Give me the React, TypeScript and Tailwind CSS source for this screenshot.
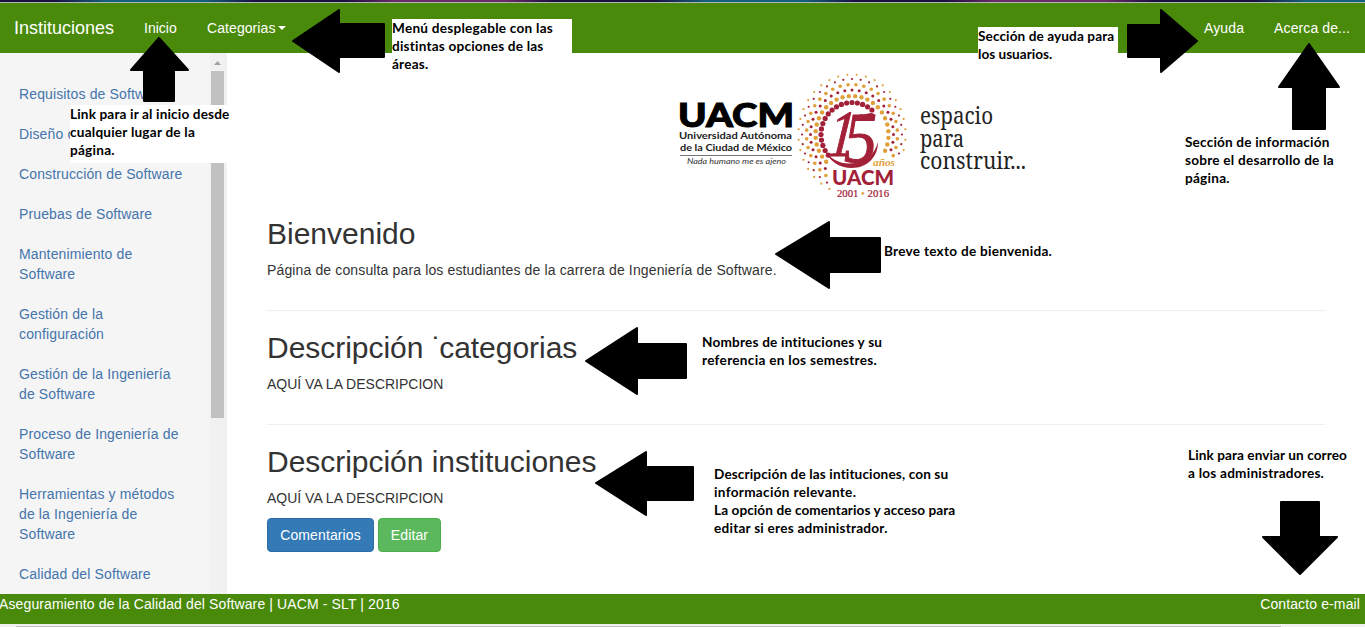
import React from "react";

type Line = [text: string, tracking: string];
type NoteProps = { lines: Line[]; place: string };

function Note({ lines, place }: NoteProps) {
  return (
    <div className={`absolute z-20 text-[13.6px] leading-[18px] font-bold whitespace-nowrap text-black [font-variant-ligatures:none] font-['Lato','Liberation_Sans',sans-serif] ${place}`}>
      {lines.map(([text, tracking]) => (
        <span key={text} className={`block ${tracking}`}>{text}</span>
      ))}
    </div>
  );
}

const arrows = [
  "293,41 339,10 339,24 384,24 384,57 339,57 339,72",
  "159,38 188,70 174,70 174,101 144,101 144,70 131,70",
  "1197,41 1161,10 1161,25 1128,25 1128,57 1161,57 1161,72",
  "1309,44 1339,87 1325,87 1325,129 1293,129 1293,87 1279,87",
  "776,254 829,222 829,238 880,238 880,272 829,272 829,288",
  "586,361 637,328 637,344 686,344 686,378 637,378 637,394",
  "596,483 646,452 646,467 693,467 693,500 646,500 646,515",
  "1300,574 1337,537 1319,537 1319,502 1281,502 1281,537 1263,537",
];

function Arrows() {
  return (
    <svg className="pointer-events-none absolute top-0 left-0 z-10" width="1365" height="627">
      {arrows.map((p) => (
        <polygon key={p} points={p} fill="#000" stroke="#000" strokeWidth="2" strokeLinejoin="round" />
      ))}
    </svg>
  );
}

const rings = [
  { rx: 31, ry: 32, size: 2.6, color: "#a32138", from: 140, to: 315, off: 0 },
  { rx: 36.5, ry: 38.5, size: 2.2, color: "#dfa03c", from: 135, to: 388, off: 0.5 },
  { rx: 41.5, ry: 44.5, size: 1.5, color: "#a32138", from: 125, to: 388, off: 0 },
  { rx: 45.5, ry: 50, size: 1.8, color: "#dfa03c", from: 120, to: 385, off: 0.5 },
  { rx: 50, ry: 55.5, size: 1.1, color: "#a32138", from: 116, to: 385, off: 0 },
  { rx: 53.5, ry: 60, size: 1.1, color: "#dfa03c", from: 112, to: 380, off: 0.5 },
];

function Logo() {
  const dots: React.ReactNode[] = [];
  rings.forEach((l, k) => {
    for (let i = 0; i < 36; i++) {
      let a = (i + l.off) * 10;
      if (a < l.from) a += 360;
      if (a > l.to) continue;
      const t = (a * Math.PI) / 180;
      dots.push(
        <circle key={`${k}-${i}`} cx={182 + l.rx * Math.cos(t)} cy={74.5 + l.ry * Math.sin(t)} r={l.size} fill={l.color} />,
      );
    }
  });
  return (
    <svg className="block" width="370" height="145" viewBox="0 0 370 145">
      <g className="font-['Lato','Liberation_Sans',sans-serif]">
        <text x="8" y="67" fontSize="32" fontWeight="900" textLength="116" lengthAdjust="spacingAndGlyphs" fill="#000" stroke="#000" strokeWidth="1">UACM</text>
        <text x="9" y="79" fontSize="8.6" fontWeight="700" textLength="113" lengthAdjust="spacingAndGlyphs" fill="#222">Universidad Autónoma</text>
        <text x="10" y="91" fontSize="8.6" fontWeight="700" textLength="112" lengthAdjust="spacingAndGlyphs" fill="#222">de la Ciudad de México</text>
        <rect x="10" y="95" width="112" height="1" fill="#777" />
        <text x="17" y="104" fontSize="7" fontStyle="italic" textLength="99" lengthAdjust="spacingAndGlyphs" fill="#333">Nada humano me es ajeno</text>
      </g>
      {dots}
      <g fill="#a32138">
        <g className="font-['Liberation_Serif',serif]" fontStyle="italic" stroke="#a32138" strokeWidth="1">
          <text transform="translate(157 96) skewX(-6)" fontSize="66" textLength="26" lengthAdjust="spacingAndGlyphs">1</text>
          <text transform="translate(174 102)" fontSize="71" textLength="33" lengthAdjust="spacingAndGlyphs">5</text>
        </g>
        <path d="M190 54 C196 56 200 51 204 54 C207 57 203 61 199 60 C195 60 192 59 188 59Z" />
        <path d="M154 89 C161 101 173 105 185 103 C196 101 205 94 208 82 C208 97 197 108 182 108 C169 108 159 101 154 89Z" />
        <text x="162" y="125" fontSize="21" fontWeight="900" textLength="62" lengthAdjust="spacingAndGlyphs" className="font-['Lato',sans-serif]">UACM</text>
        <text x="167" y="137" fontSize="9.5" textLength="52" lengthAdjust="spacingAndGlyphs" className="font-['Liberation_Serif',serif]" stroke="#a32138" strokeWidth="0.2">
          2001 <tspan fill="#dfa03c" stroke="#dfa03c">•</tspan> 2016
        </text>
      </g>
      <text x="203" y="106" fontSize="10" fontStyle="italic" fontWeight="700" textLength="22" lengthAdjust="spacingAndGlyphs" fill="#dfa03c" className="font-['Liberation_Serif',serif]">años</text>
      <g className="font-['Noto_Serif','Liberation_Serif',serif]" fill="#222" fontSize="24">
        <text x="250" y="64" textLength="73" lengthAdjust="spacingAndGlyphs">espacio</text>
        <text x="250" y="86.5" textLength="44" lengthAdjust="spacingAndGlyphs">para</text>
        <text x="250" y="109" textLength="106" lengthAdjust="spacingAndGlyphs">construir...</text>
      </g>
    </svg>
  );
}

const links: string[][] = [
  ["Requisitos de Software"],
  ["Diseño de Software"],
  ["Construcción de Software"],
  ["Pruebas de Software"],
  ["Mantenimiento de", "Software"],
  ["Gestión de la", "configuración"],
  ["Gestión de la Ingeniería", "de Software"],
  ["Proceso de Ingeniería de", "Software"],
  ["Herramientas y métodos", "de la Ingeniería de", "Software"],
  ["Calidad del Software"],
];

function Sidebar() {
  return (
    <aside className="flex h-full w-[227px] shrink-0 overflow-hidden bg-[#f5f5f5]">
      <nav className="flex flex-1 flex-col gap-5 pt-[31px] pl-[19px] text-[#4474ac]">
        {links.map((l) => (
          <a key={l[0]} className="block tracking-[0.13px] whitespace-nowrap">
            {l.map((t) => (
              <span key={t} className="block">{t}</span>
            ))}
          </a>
        ))}
      </nav>
      <div className="flex w-[17px] flex-col items-start bg-[#f1f1f1] pl-px">
        <svg className="mt-2 ml-[3px] block" width="7" height="4"><path d="M0 4 3.5 0 7 4Z" fill="#a0a0a0" /></svg>
        <div className="mt-[6px] h-[347px] w-[13px] bg-[#c1c1c1]" />
      </div>
    </aside>
  );
}

export default function App() {
  return (
    <div className="relative flex h-[627px] w-[1365px] flex-col overflow-hidden bg-white font-['Liberation_Sans',Arial,sans-serif] text-[14px] leading-5 text-[#333]">
      <div className="h-[2px] shrink-0 bg-[repeating-linear-gradient(90deg,#1a1040_0px,#1a1040_55px,#12607c_105px,#12607c_205px,#1a1040_255px,#1a1040_345px,#6b2868_395px,#6b2868_505px,#1a1040_555px,#1a1040_600px)]" />
      <div className="h-px shrink-0 bg-[#b5b5b5]" />
      <header className="flex h-[50px] shrink-0 items-center bg-[#4a8a0a] text-white">
        <span className="ml-[14px] w-[130px] text-[18px]">Instituciones</span>
        <span className="w-[63px]">Inicio</span>
        <span className="flex items-center gap-[2px] tracking-[0.08px]">
          Categorias
          <svg width="8" height="4"><path d="M0 0H8L4 4Z" fill="#fff" /></svg>
        </span>
        <span className="mr-[30px] ml-auto tracking-[0.15px]">Ayuda</span>
        <span className="mr-[15px] tracking-[0.1px]">Acerca de...</span>
      </header>
      <div className="flex h-[541px] shrink-0">
        <Sidebar />
        <main className="flex-1 pr-10 pl-10">
          <div className="mt-[7px] ml-[403px] h-[145px]"><Logo /></div>
          <h2 className="mt-3 text-[30px] leading-[33px]">Bienvenido</h2>
          <p className="mt-[10px] tracking-[0.136px]">Página de consulta para los estudiantes de la carrera de Ingeniería de Software.</p>
          <hr className="mt-[30px] border-[#eee]" />
          <h2 className="mt-5 text-[30px] leading-[33px] tracking-[-0.03px]">
            Descripción <span className="-mr-[2.5px]">˙</span>categorias
          </h2>
          <p className="mt-[10px]">AQUÍ VA LA DESCRIPCION</p>
          <hr className="mt-[30px] border-[#eee]" />
          <h2 className="mt-5 text-[30px] leading-[33px] tracking-[-0.03px]">Descripción instituciones</h2>
          <p className="mt-[10px]">AQUÍ VA LA DESCRIPCION</p>
          <div className="mt-[10px] flex gap-1 tracking-[0.12px] text-white">
            <button className="h-[34px] w-[107px] rounded border border-[#2e6da4] bg-[#337ab7]">Comentarios</button>
            <button className="h-[34px] w-[63px] rounded border border-[#4cae4c] bg-[#5cb85c]">Editar</button>
          </div>
        </main>
      </div>
      <footer className="flex h-[30px] shrink-0 justify-between bg-[#4a8a0a] pr-[5px] tracking-[0.12px] text-white">
        <span className="-ml-px">Aseguramiento de la Calidad del Software | UACM - SLT | 2016</span>
        <span>Contacto e-mail</span>
      </footer>
      <div className="flex h-[3px] flex-col bg-[#f1f1f1] pt-[2px]">
        <div className="ml-4 h-px w-[1265px] bg-[#c1c1c1]" />
      </div>
      <Note
        place="left-[70px] top-[105px] h-[58px] w-[158px] bg-white"
        lines={[["Link para ir al inicio desde", "tracking-[0.15px]"], ["cualquier lugar de la", "tracking-[0.22px]"], ["página.", "tracking-[0.25px]"]]}
      />
      <Note
        place="left-[392px] top-[19px] h-[56px] w-[180px] bg-white"
        lines={[["Menú desplegable con las", "tracking-[0.25px]"], ["distintas opciones de las", "tracking-[0.2px]"], ["áreas.", "tracking-[0.2px]"]]}
      />
      <Note
        place="left-[978px] top-[27px] h-[36px] w-[140px] bg-white"
        lines={[["Sección de ayuda para", "tracking-[0.1px]"], ["los usuarios.", "tracking-normal"]]}
      />
      <Note
        place="left-[1185px] top-[133px]"
        lines={[["Sección de información", "tracking-[0.18px]"], ["sobre el desarrollo de la", "tracking-[0.24px]"], ["página.", "tracking-[0.25px]"]]}
      />
      <Note place="left-[884px] top-[242px]" lines={[["Breve texto de bienvenida.", "tracking-[0.27px]"]]} />
      <Note
        place="left-[702px] top-[333px]"
        lines={[["Nombres de intituciones y su", "tracking-[0.2px]"], ["referencia en los semestres.", "tracking-[0.29px]"]]}
      />
      <Note
        place="left-[714px] top-[465px]"
        lines={[
          ["Descripción de las intituciones, con su", "tracking-[0.13px]"],
          ["información relevante.", "tracking-[0.32px]"],
          ["La opción de comentarios y acceso para", "tracking-[0.08px]"],
          ["editar si eres administrador.", "tracking-[0.24px]"],
        ]}
      />
      <Note
        place="left-[1188px] top-[446px]"
        lines={[["Link para enviar un correo", "tracking-[0.08px]"], ["a los administradores.", "tracking-[0.23px]"]]}
      />
      <Arrows />
    </div>
  );
}
